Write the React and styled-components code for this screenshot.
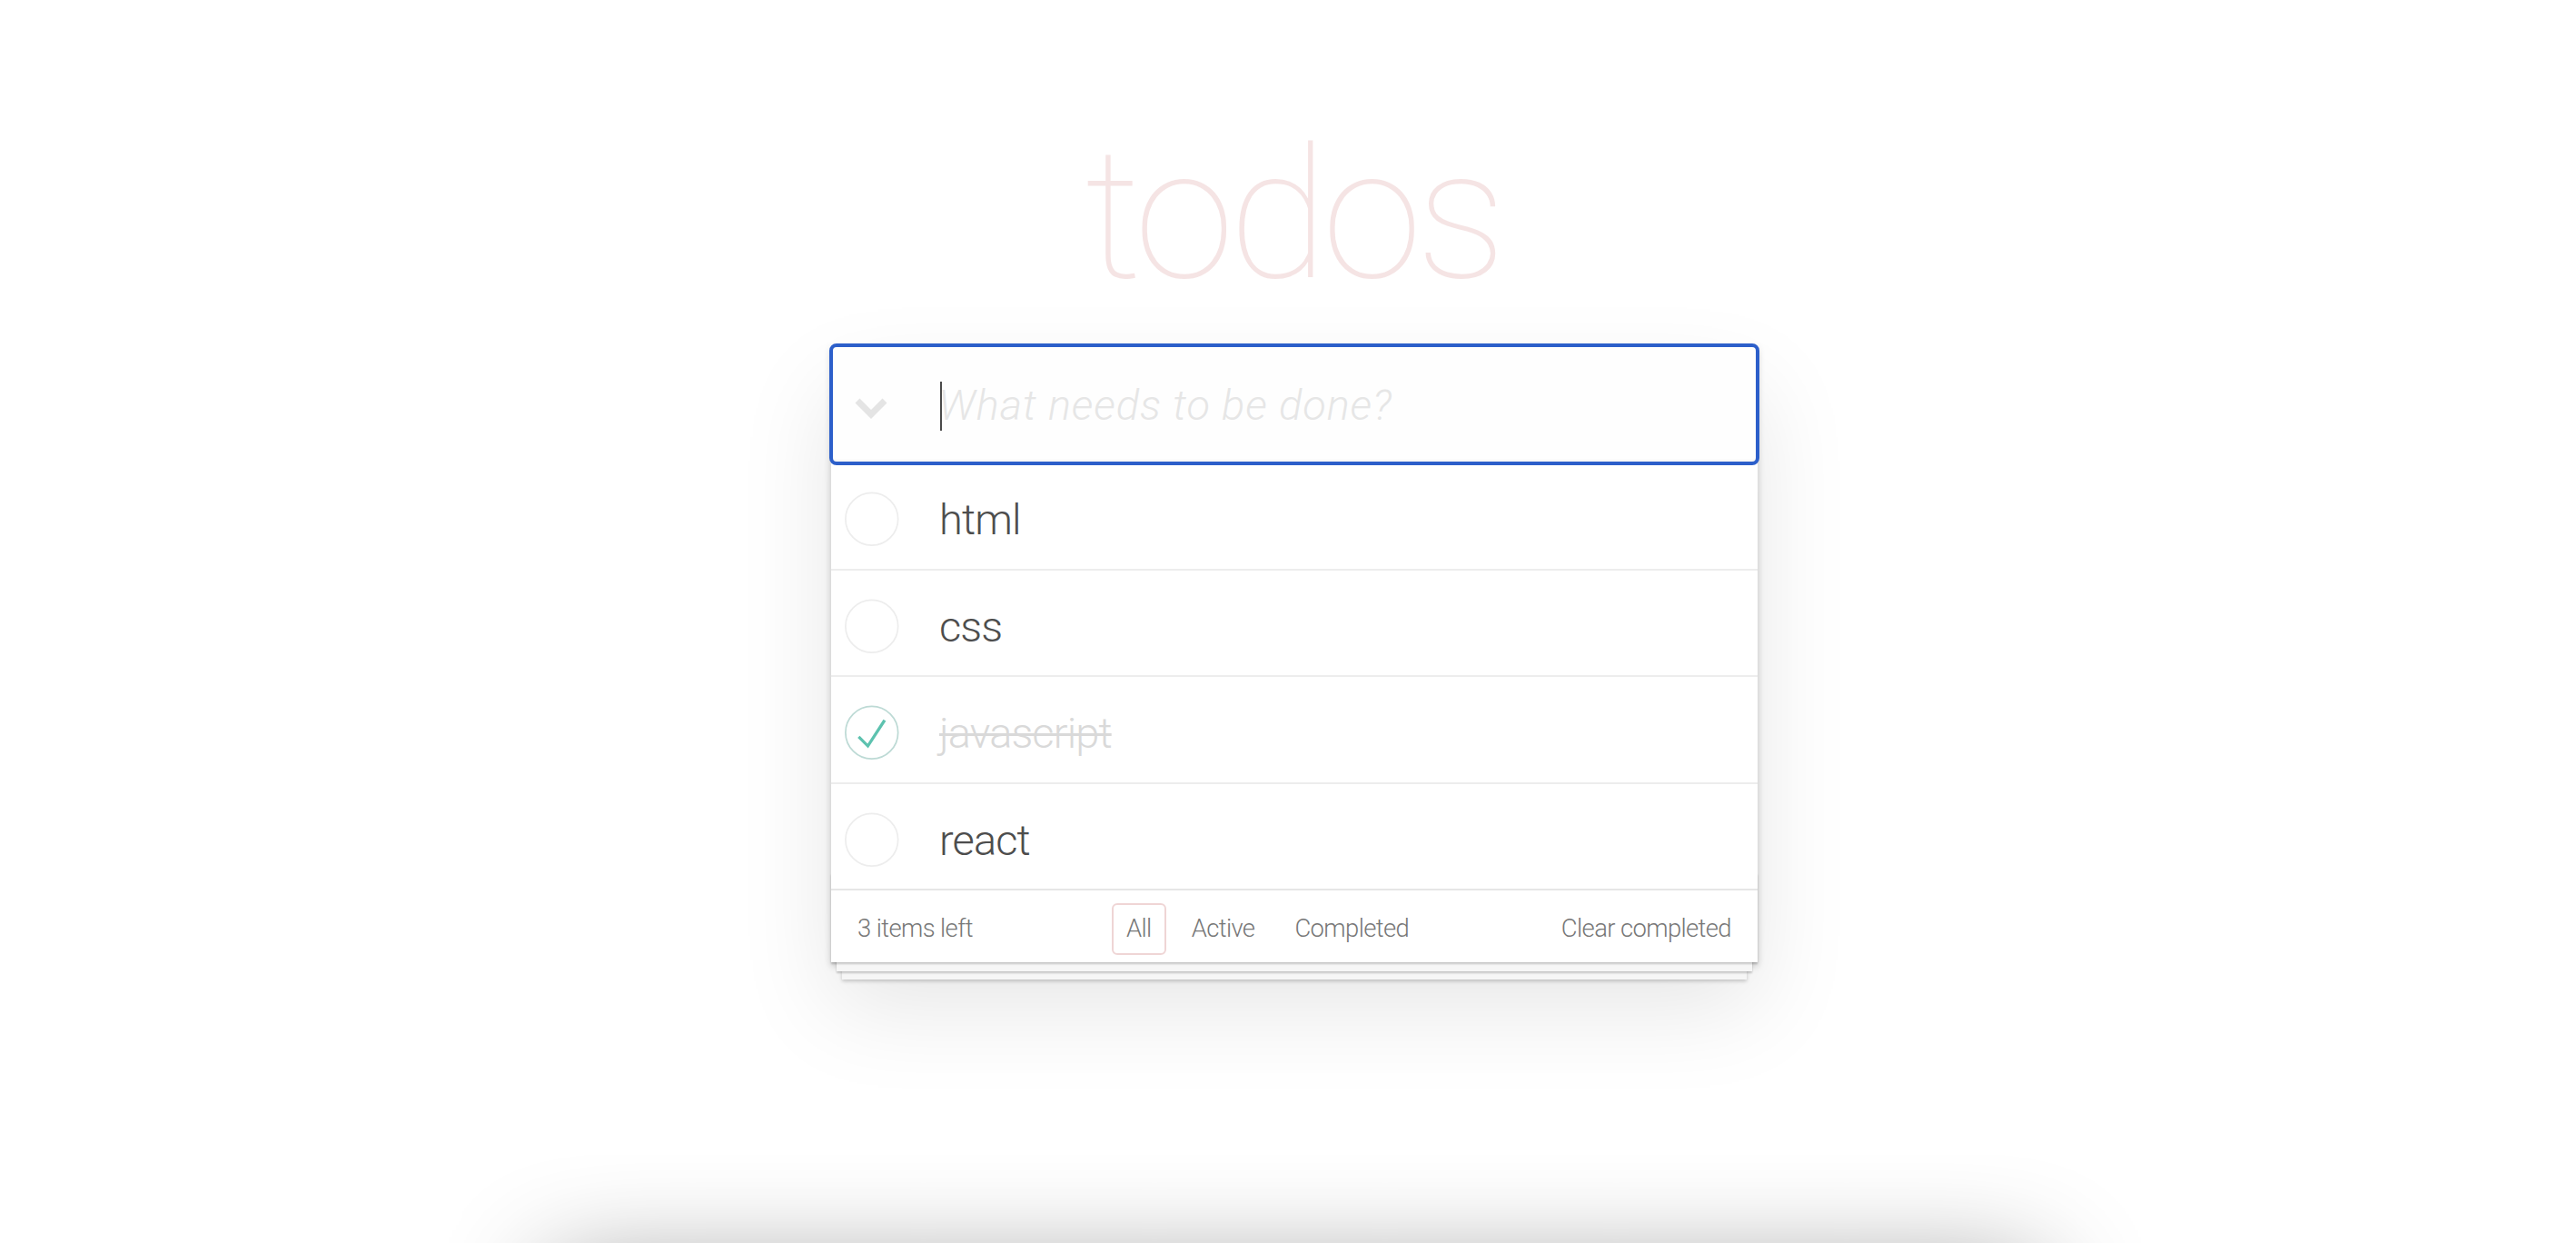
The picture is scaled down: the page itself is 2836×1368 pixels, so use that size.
import React from "react";
import styled, { createGlobalStyle } from "styled-components";

const GlobalStyle = createGlobalStyle`
  * {
    box-sizing: border-box;
  }

  html,
  body {
    margin: 0;
    padding: 0;
    background: #fff;
  }

  body {
    font-family: Roboto, "Helvetica Neue", "Liberation Sans", Arial, sans-serif;
    font-weight: 300;
    color: #4d4d4d;
    -webkit-font-smoothing: antialiased;
  }
`;

const Page = styled.div`
  height: 100vh;
  overflow: hidden;
  display: flex;
  flex-direction: column;
  align-items: center;
  padding-left: 14px;
`;

const Title = styled.h1`
  margin: 137px 0 43px;
  padding-right: 4px;
  font-size: 200px;
  font-weight: 100;
  line-height: 200px;
  color: rgba(175, 47, 47, 0.13);
  letter-spacing: -6.5px;
  text-rendering: optimizeLegibility;
`;

const TodoApp = styled.section`
  position: relative;
  flex: none;
  width: 1020px;
  background: #fff;
  box-shadow: 0 4px 8px 0 rgba(0, 0, 0, 0.2), 0 49px 98px 0 rgba(0, 0, 0, 0.1);
`;

const Header = styled.header`
  position: relative;
  z-index: 1;
`;

const NewTodo = styled.input`
  display: block;
  width: 100%;
  height: 130px;
  margin: 0;
  padding: 0 31px 0 118px;
  border: none;
  border-radius: 6px;
  outline: 4px solid #2c5fca;
  outline-offset: -2px;
  background: rgba(0, 0, 0, 0.003);
  box-shadow: inset 0 -4px 2px rgba(0, 0, 0, 0.03);
  font-family: inherit;
  font-size: 47px;
  font-weight: 300;
  color: #4d4d4d;

  &::placeholder {
    font-style: italic;
    font-weight: 300;
    letter-spacing: 0.9px;
    color: #e6e6e6;
  }
`;

// the chevron sits over the left padding of the input
const ToggleAll = styled.label`
  position: absolute;
  left: 26px;
  top: 57px;
  display: flex;
  color: #e4e4e4;
`;

const Caret = styled.span`
  position: absolute;
  left: 120px;
  top: 40px;
  width: 2px;
  height: 54px;
  background: #4a4a4a;
`;

const TodoList = styled.ul`
  margin: 0;
  padding: 0;
  list-style: none;
`;

const TodoItem = styled.li`
  display: flex;
  align-items: center;
  height: 117.6px;
  border-bottom: 2px solid #ededed;

  &:last-child {
    height: 115.6px;
    border-bottom: none;
  }
`;

const ToggleBox = styled.span`
  display: flex;
  flex: none;
  width: 78px;
  height: 78px;
  margin-top: 7px;
`;

const ItemLabel = styled.label`
  padding: 9px 0 0 41px;
  font-size: 47px;
  line-height: 1.2;
  letter-spacing: -0.9px;
  color: ${(p) => (p.$done ? "#d9d9d9" : "#4d4d4d")};
  text-decoration: ${(p) => (p.$done ? "line-through" : "none")};
  text-decoration-thickness: 3px;
`;

const Footer = styled.footer`
  position: relative;
  display: flex;
  align-items: center;
  height: 80.6px;
  padding: 5px 29px 0;
  border-top: 2px solid #e6e6e6;
  color: #777;
  font-size: 27.4px;

  &::before {
    content: "";
    position: absolute;
    right: 0;
    bottom: 0;
    left: 0;
    height: 98px;
    overflow: hidden;
    pointer-events: none;
    box-shadow: 0 2px 2px rgba(0, 0, 0, 0.2), 0 16px 0 -6px #f6f6f6,
      0 18px 2px -6px rgba(0, 0, 0, 0.2), 0 31px 0 -12px #f6f6f6,
      0 33px 4px -12px rgba(0, 0, 0, 0.2);
  }
`;

const TodoCount = styled.span`
  flex: 0 0 274px;
  letter-spacing: -0.6px;

  strong {
    font-weight: 300;
  }
`;

const Filters = styled.ul`
  display: flex;
  margin: 0;
  padding: 0;
  list-style: none;
`;

const FilterLink = styled.a`
  display: block;
  margin: 0 6px;
  padding: 6px 14px;
  border: 2px solid ${(p) => (p.$selected ? "rgba(175, 47, 47, 0.2)" : "transparent")};
  border-radius: 6px;
  line-height: 41px;
  letter-spacing: -0.6px;
  color: inherit;
  text-decoration: none;
`;

const ClearCompleted = styled.button`
  margin-left: auto;
  padding: 0;
  border: none;
  background: none;
  font: inherit;
  letter-spacing: -0.6px;
  color: inherit;
`;

// shadow of the panel that starts just under the window
const Shelf = styled.div`
  flex: none;
  width: 1640px;
  height: 100px;
  margin-top: auto;
  margin-bottom: -132px;
  background: #fff;
  box-shadow: 0 0 120px rgba(0, 0, 0, 0.44);
`;

const todos = [
  { id: 1, title: "html", completed: false },
  { id: 2, title: "css", completed: false },
  { id: 3, title: "javascript", completed: true },
  { id: 4, title: "react", completed: false },
];

const Chevron = () => (
  <svg width="36" height="26" viewBox="0 0 36 26">
    <polyline
      points="3,4 18,19 33,4"
      fill="none"
      stroke="currentColor"
      strokeWidth="7"
      strokeLinecap="butt"
      strokeLinejoin="miter"
    />
  </svg>
);

const CheckCircle = ({ checked }) => (
  <svg width="78" height="78" viewBox="-10 -18 100 135">
    <circle
      cx="50"
      cy="50"
      r="50"
      fill="none"
      stroke={checked ? "#bddad5" : "#ededed"}
      strokeWidth="3"
    />
    {checked && <path fill="#5dc2af" d="M72 25L42 71 27 56l-4 4 20 20 34-52z" />}
  </svg>
);

export default function App() {
  const left = todos.filter((t) => !t.completed).length;

  return (
    <>
      <GlobalStyle />
      <Page>
        <Title>todos</Title>
        <TodoApp>
          <Header>
            <NewTodo placeholder="What needs to be done?" readOnly />
            <ToggleAll>
              <Chevron />
            </ToggleAll>
            <Caret />
          </Header>
          <TodoList>
            {todos.map((todo) => (
              <TodoItem key={todo.id}>
                <ToggleBox>
                  <CheckCircle checked={todo.completed} />
                </ToggleBox>
                <ItemLabel $done={todo.completed}>{todo.title}</ItemLabel>
              </TodoItem>
            ))}
          </TodoList>
          <Footer>
            <TodoCount>
              <strong>{left}</strong> items left
            </TodoCount>
            <Filters>
              <li>
                <FilterLink href="#/" $selected>
                  All
                </FilterLink>
              </li>
              <li>
                <FilterLink href="#/active">Active</FilterLink>
              </li>
              <li>
                <FilterLink href="#/completed">Completed</FilterLink>
              </li>
            </Filters>
            <ClearCompleted>Clear completed</ClearCompleted>
          </Footer>
        </TodoApp>
        <Shelf />
      </Page>
    </>
  );
}
